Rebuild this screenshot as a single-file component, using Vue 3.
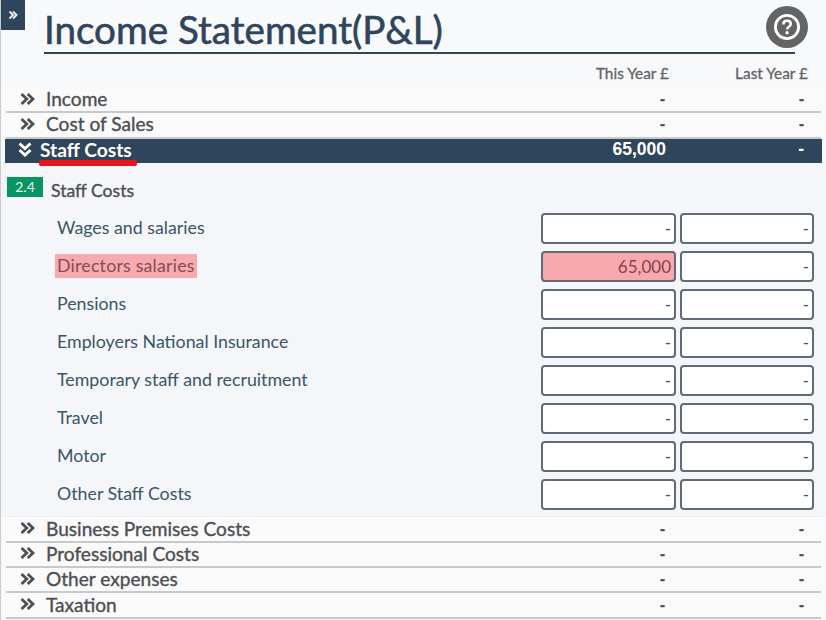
<script setup>
const topRows = [
  { name: 'Income', a: '-', b: '-' },
  { name: 'Cost of Sales', a: '-', b: '-' }
]
const items = [
  { name: 'Wages and salaries', a: '-', b: '-' },
  { name: 'Directors salaries', a: '65,000', b: '-', flagged: true },
  { name: 'Pensions', a: '-', b: '-' },
  { name: 'Employers National Insurance', a: '-', b: '-' },
  { name: 'Temporary staff and recruitment', a: '-', b: '-' },
  { name: 'Travel', a: '-', b: '-' },
  { name: 'Motor', a: '-', b: '-' },
  { name: 'Other Staff Costs', a: '-', b: '-' }
]
const bottomRows = ['Business Premises Costs', 'Professional Costs', 'Other expenses', 'Taxation']
</script>

<template>
  <div class="page">
    <div class="tag">
      <svg width="10" height="10" viewBox="0 0 10 10"><path d="M1.500 1.500 5 5 1.500 8.500M5 1.500 8.500 5 5 8.500" fill="none" stroke="#e8edf2" stroke-width="1.900"/></svg>
    </div>
    <header class="head">
      <h1 class="title">Income Statement(P&amp;L)</h1>
      <div class="help">
        <svg width="30" height="30" viewBox="0 0 30 30">
          <circle cx="15" cy="15" r="11.600" fill="none" stroke="#fff" stroke-width="2.800"/>
          <path d="M11.300 12.400c0-2.200 1.600-3.600 3.800-3.600s3.700 1.300 3.700 3.200c0 2.900-3.700 2.800-3.700 5.500" fill="none" stroke="#fff" stroke-width="2.500"/>
          <circle cx="15.100" cy="20.700" r="1.700" fill="#fff"/>
        </svg>
      </div>
    </header>
    <div class="cols">
      <span class="col-a">This Year £</span>
      <span class="col-b">Last Year £</span>
    </div>

    <div v-for="r in topRows" :key="r.name" class="row">
      <svg class="chev" width="15" height="12" viewBox="0 0 15 12"><path d="M1.500 1 6.800 6l-5.300 5M7.700 1 13 6l-5.300 5" fill="none" stroke="#4d4f53" stroke-width="2.800"/></svg>
      <span class="row-name">{{ r.name }}</span>
      <span class="val-a">{{ r.a }}</span>
      <span class="val-b">{{ r.b }}</span>
    </div>

    <div class="active">
      <svg class="chev-down" width="14" height="15" viewBox="0 0 14 15"><path d="M1.500 1.500 7 6.500l5.500-5M1.500 8 7 13l5.500-5" fill="none" stroke="#fff" stroke-width="3"/></svg>
      <span class="active-name">Staff Costs<i class="red-line"></i></span>
      <span class="active-a">65,000</span>
      <span class="active-b">-</span>
    </div>

    <section class="panel">
      <div class="sub">
        <span class="badge">2.4</span>
        <span class="sub-name">Staff Costs</span>
      </div>
      <div v-for="it in items" :key="it.name" class="item">
        <span class="item-name" :class="{ flagged: it.flagged }">{{ it.name }}</span>
        <div class="box" :class="{ 'box-flagged': it.flagged }">{{ it.a }}</div>
        <div class="box box-last">{{ it.b }}</div>
      </div>
    </section>

    <div v-for="n in bottomRows" :key="n" class="row">
      <svg class="chev" width="15" height="12" viewBox="0 0 15 12"><path d="M1.500 1 6.800 6l-5.300 5M7.700 1 13 6l-5.300 5" fill="none" stroke="#4d4f53" stroke-width="2.800"/></svg>
      <span class="row-name">{{ n }}</span>
      <span class="val-a">-</span>
      <span class="val-b">-</span>
    </div>
  </div>
</template>

<style>
html, body { margin: 0; background: #f8f9fb; }
</style>

<style scoped>
.page {
  position: relative;
  box-sizing: border-box;
  width: 826px;
  height: 620px;
  overflow: hidden;
  padding-left: 5px;
  background: #f8f9fb;
  border-left: 1px solid #c9cccf;
  font-family: Lato, "Liberation Sans", sans-serif;
  color: #4d4f53;
}
.tag {
  position: absolute;
  left: -1px;
  top: 0;
  width: 25px;
  height: 30px;
  background: #2f455c;
  display: flex;
  align-items: center;
  justify-content: center;
  padding-bottom: 1px;
  box-sizing: border-box;
}
.head {
  position: relative;
  margin-left: 38px;
  width: 751px;
  height: 54px;
  border-bottom: 2.500px solid #2f455c;
  box-sizing: border-box;
}
.title {
  margin: 0;
  padding-top: 7px;
  font-size: 38.600px;
  line-height: 44px;
  font-weight: 400;
  -webkit-text-stroke: 0.6px #2f455c;
  color: #2f455c;
  white-space: nowrap;
}
.help {
  position: absolute;
  right: -13px;
  top: 6px;
  width: 42px;
  height: 42px;
  border-radius: 50%;
  background: #636466;
  display: flex;
  align-items: center;
  justify-content: center;
}
.cols {
  display: flex;
  height: 34px;
  align-items: center;
  justify-content: flex-end;
  font-size: 15.400px;
  font-weight: 400;
  -webkit-text-stroke: 0.3px #636466;
  color: #636466;
  box-sizing: border-box;
  padding-top: 4px;
  width: 802px;
}
.col-a { white-space: nowrap; margin-right: 65px; }
.col-b { width: 74px; white-space: nowrap; text-align: right; }
.row {
  display: flex;
  align-items: center;
  box-sizing: border-box;
  width: 815px;
  height: 25.300px;
  padding: 0 17px 2px 14px;
  background: #fafafa;
  border-bottom: 2px solid #c8c9ca;
  font-size: 19.100px;
  -webkit-text-stroke: 0.35px #4d4f53;
}
.chev { flex: none; margin-right: 11px; }
.row-name { flex: 1; white-space: nowrap; }
.val-a { width: 20px; text-align: right; margin-right: 119px; font-family: "Liberation Sans", sans-serif; font-size: 15px; font-weight: 700; }
.val-b { width: 20px; text-align: right; font-family: "Liberation Sans", sans-serif; font-size: 15px; font-weight: 700; }
.active {
  display: flex;
  align-items: center;
  box-sizing: border-box;
  margin-left: -1px;
  width: 817px;
  height: 24.400px;
  padding: 0 18px 2px 13px;
  background: #2f455c;
  color: #fff;
}
.chev-down { flex: none; margin-right: 8px; }
.active-name {
  position: relative;
  flex: 1;
  font-size: 19.200px;
  font-weight: 700;
  white-space: nowrap;
}
.red-line {
  position: absolute;
  left: -1px;
  top: 22px;
  width: 98px;
  height: 5.500px;
  border-radius: 2px;
  background: #e8141e;
}
.active-a, .active-b {
  font-family: "Liberation Sans", Arial, sans-serif;
  font-size: 17.500px;
  font-weight: 700;
  text-align: right;
}
.active-a { width: 80px; margin-right: 118px; }
.active-b { width: 20px; }
.panel {
  box-sizing: border-box;
  height: 354.500px;
  margin-left: -5px;
  padding-top: 14px;
  background: #f4f6f9;
  border-bottom: 1px solid #eceef1;
}
.sub {
  display: flex;
  align-items: center;
  height: 20px;
  margin-bottom: 13px;
}
.badge {
  box-sizing: border-box;
  margin-left: 6px;
  width: 36px;
  height: 20px;
  background: #0a9463;
  color: #e6f5ee;
  font-size: 14px;
  line-height: 19px;
  text-align: center;
}
.sub-name {
  margin-left: 8px;
  padding-top: 8px;
  font-size: 17.600px;
  -webkit-text-stroke: 0.35px #4d4f53;
  color: #4d4f53;
}
.item {
  display: flex;
  align-items: center;
  height: 38px;
  width: 813px;
}
.item-name {
  margin-left: 54px;
  margin-right: auto;
  margin-bottom: 1px;
  padding: 0 2px;
  height: 24px;
  line-height: 23px;
  font-size: 17.800px;
  color: #3b5568;
  white-space: nowrap;
}
.flagged {
  padding-right: 2px;
  letter-spacing: 0.2px;
  background: #f7aab0;
  color: #8a4a55;
}
.box {
  box-sizing: border-box;
  flex: none;
  width: 135px;
  height: 31px;
  margin-left: 4px;
  padding-right: 3px;
  border: 2px solid #5f6b76;
  border-radius: 4px;
  background: #fff;
  text-align: right;
  font-size: 17px;
  line-height: 28px;
  color: #4a5560;
}
.box-last { width: 134px; }
.box-flagged {
  background: #f9a8ae;
  color: #84434d;
}
</style>
